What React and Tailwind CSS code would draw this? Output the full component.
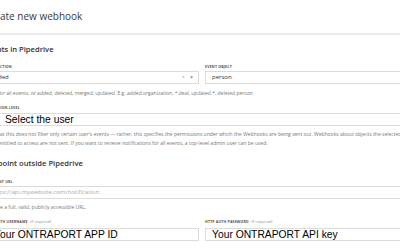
const label = "block h-[6px] leading-[6px] text-[3.6px] font-bold uppercase tracking-[0.15px] text-[#555] whitespace-nowrap";
const help = "h-[8px] leading-[8px] text-[5px] text-[#777] whitespace-nowrap";
const input = "h-[13px] border border-[#dcdcdc] bg-white flex items-center text-[6px] whitespace-nowrap overflow-hidden";

function Field({ title, hint, children, className = "" }) {
  return (
    <div className={className}>
      <span className={label}>
        {title}
        {hint && <span className="ml-[2px] font-normal normal-case text-[#888]">{hint}</span>}
      </span>
      {children}
    </div>
  );
}

export default function App() {
  return (
    <div className="w-[400px] h-[250px] overflow-hidden bg-white font-['Open_Sans',sans-serif] text-[#26292c]">
      <div className="ml-[-16px] w-[436px]">
        <div className="h-[33px] flex items-center text-[10px] font-normal text-[#3a3a3a] whitespace-nowrap">Create new webhook</div>
      </div>
      <div className="h-[2px] bg-[#ececec]" />
      <div className="ml-[-16px] w-[436px]">
        <div className="mt-[8px] h-[12px] leading-[12px] text-[7.6px] font-semibold text-[#333] whitespace-nowrap">Events in Pipedrive</div>

        <div className="mt-[8.5px] grid grid-cols-2 gap-x-[6px]">
          <Field title="Event action">
            <div className={`mt-[1.5px] ${input} pl-[6px] pr-[4px] text-[#333]`}>
              <span className="flex-1">added</span>
              <span className="text-[6px] text-[#aaa] mr-[4px]">×</span>
              <span className="text-[5px] text-[#999]">▼</span>
            </div>
          </Field>
          <Field title="Event object">
            <div className={`mt-[1.5px] ${input} pl-[6px] text-[#333]`}>person</div>
          </Field>
        </div>
        <div className={`mt-[5px] ${help}`}>Use * for all events, or added, deleted, merged, updated. E.g. added.organization, *.deal, updated.*, deleted.person</div>

        <Field title="Permission level" className="mt-[8px]">
          <div className={`mt-[2px] ${input} pl-[20px] font-['Liberation_Sans',Arial,sans-serif] text-[10.3px] text-black`}>Select the user</div>
        </Field>
        <p className="mt-[3.5px] ml-[-1.5px] leading-[9px] text-[5.03px] text-[#777] whitespace-nowrap">
          Note that this does not filter only certain user's events — rather, this specifies the permissions under which the Webhooks are being sent out. Webhooks about objects the selected user
          <br />
          <span className="ml-[1.5px]">is not entitled to access are not sent. If you want to receive notifications for all events, a top-level admin user can be used.</span>
        </p>

        <div className="mt-[9.5px] h-[12px] leading-[12px] text-[7.6px] font-semibold text-[#333] whitespace-nowrap">Endpoint outside Pipedrive</div>

        <Field title="Endpoint URL" className="mt-[10px]">
          <div className={`mt-[1px] ${input} pl-[6px] text-[#aaa]`}>https://api.mywebsite.com/notification</div>
        </Field>
        <div className={`mt-[4px] ${help}`}>Must be a full, valid, publicly accessible URL.</div>

        <div className="mt-[8px] grid grid-cols-2 gap-x-[6px]">
          <Field title="HTTP Auth username" hint="(if required)">
            <div className={`mt-[3px] ${input} pl-[9px] font-['Liberation_Sans',Arial,sans-serif] text-[10.3px] text-black`}>Your ONTRAPORT APP ID</div>
          </Field>
          <Field title="HTTP Auth password" hint="(if required)">
            <div className={`mt-[3px] ${input} pl-[6px] font-['Liberation_Sans',Arial,sans-serif] text-[10.3px] text-black`}>Your ONTRAPORT API key</div>
          </Field>
        </div>
      </div>
    </div>
  );
}
